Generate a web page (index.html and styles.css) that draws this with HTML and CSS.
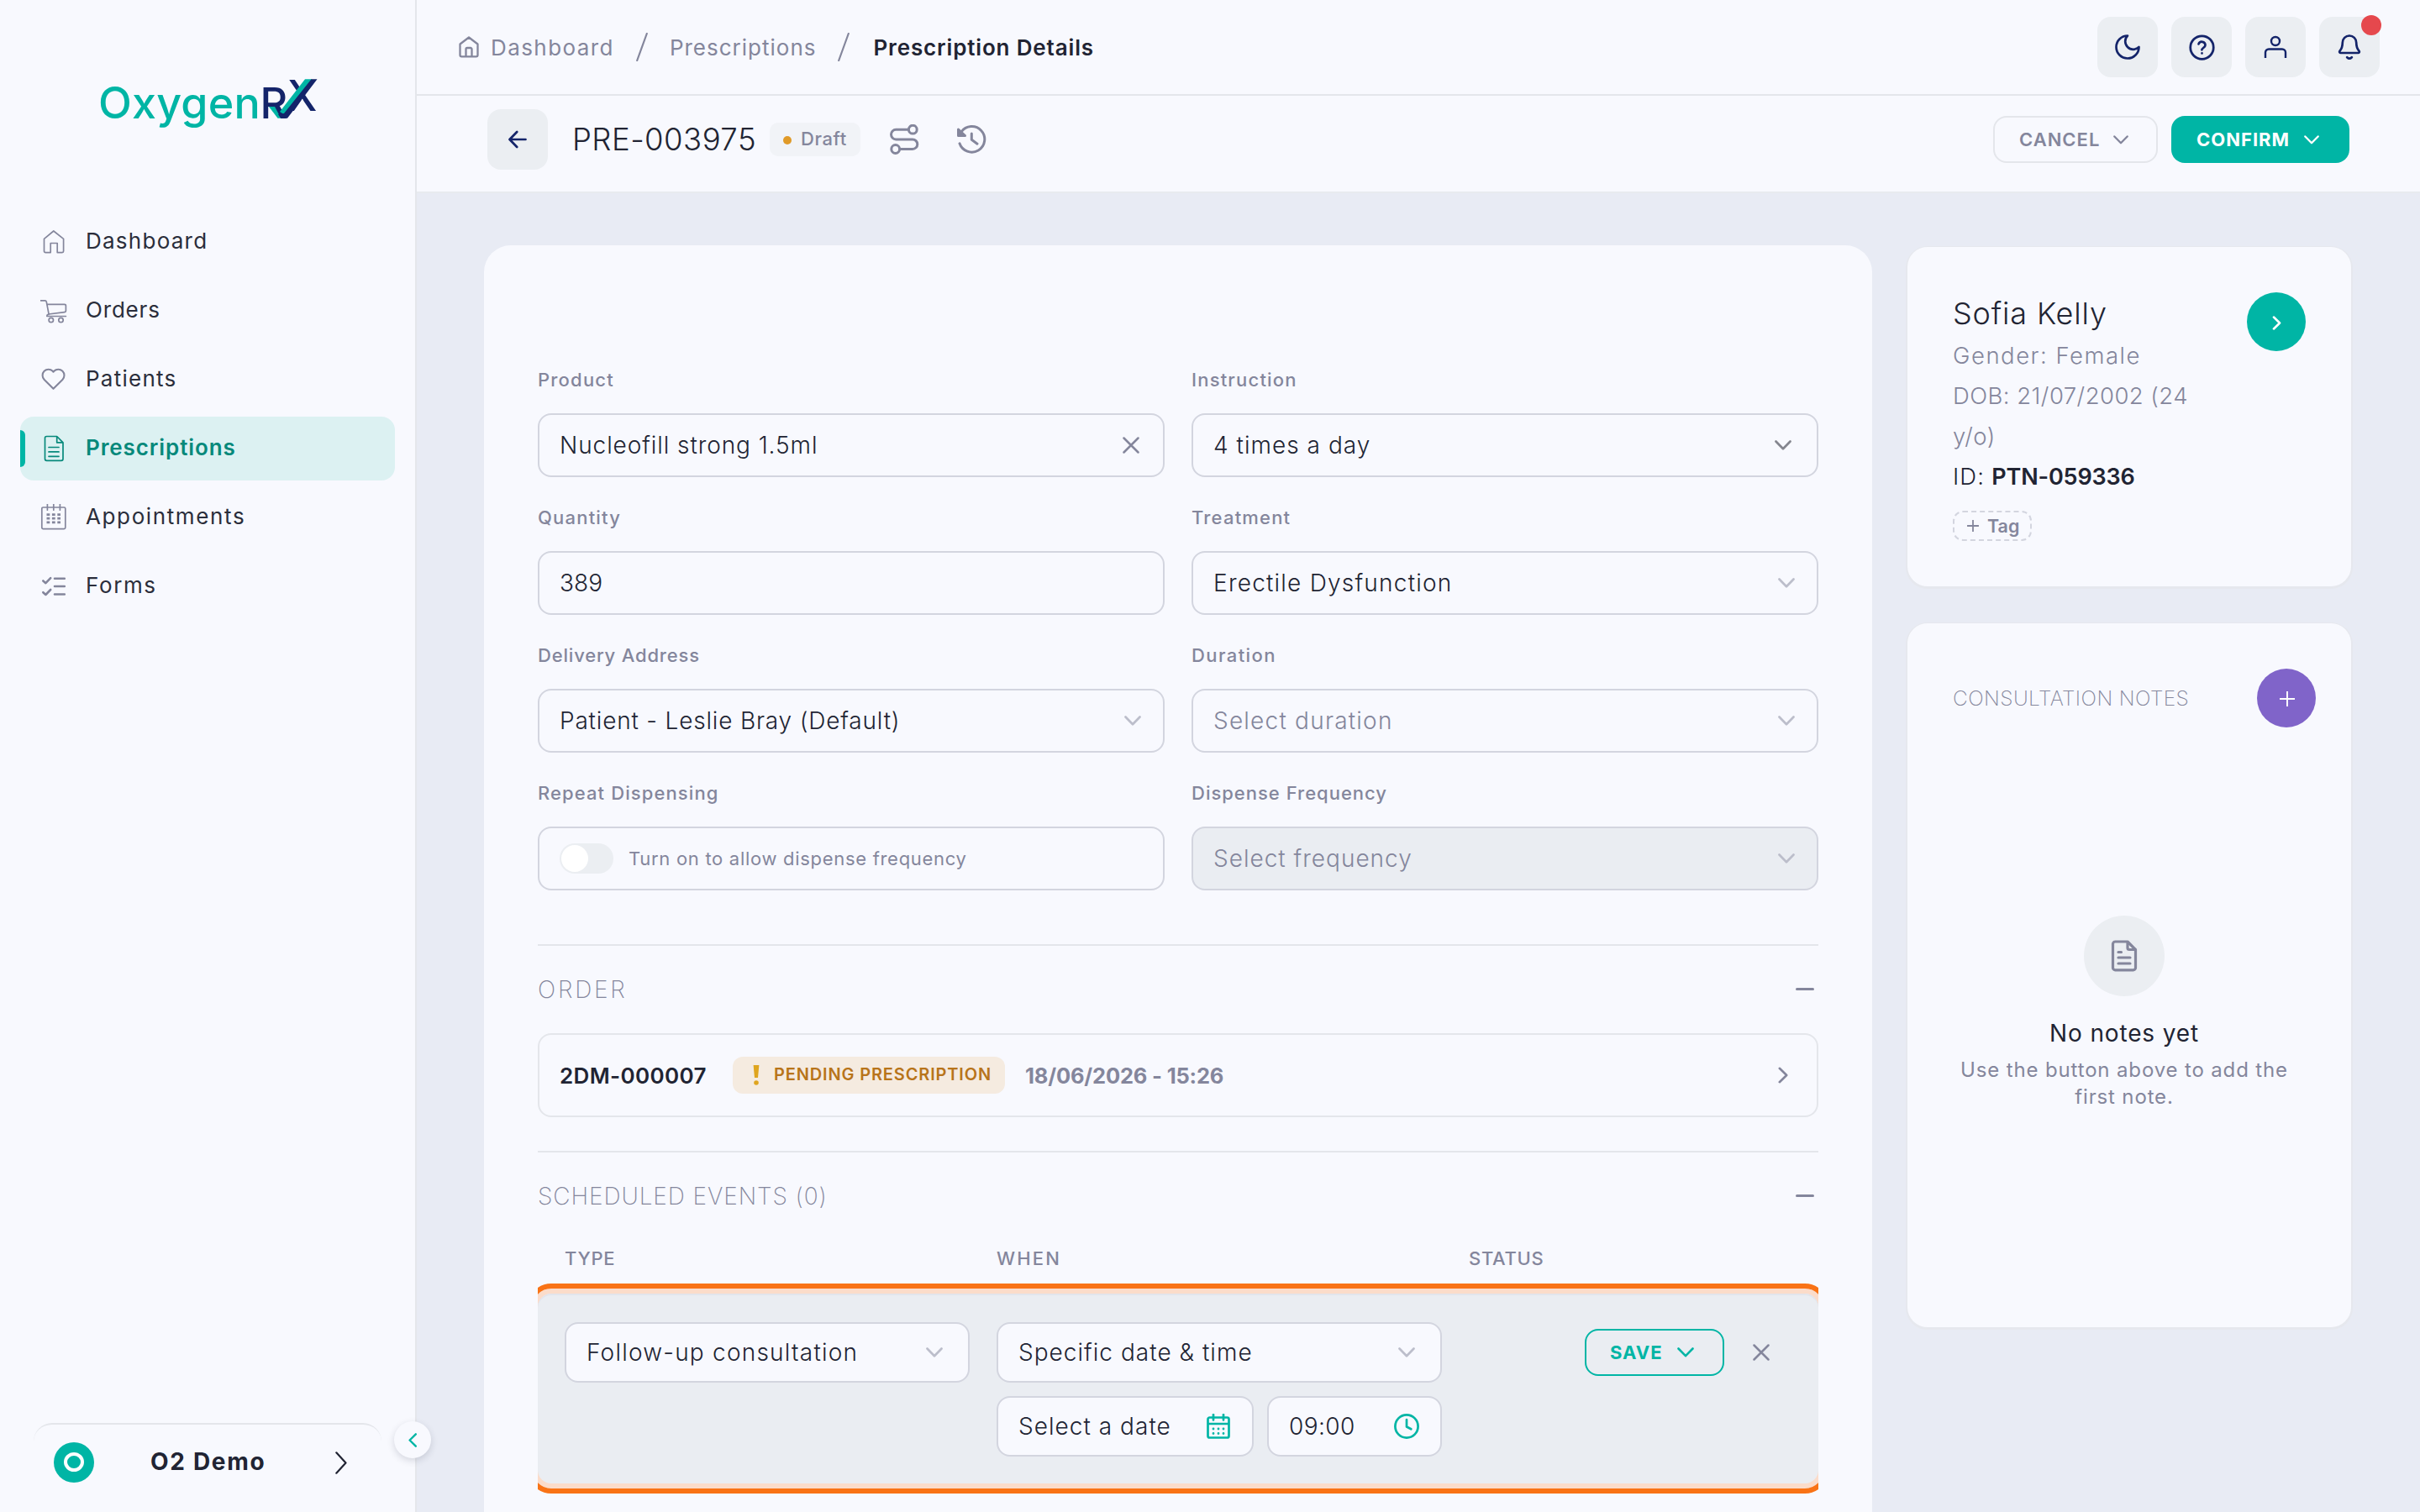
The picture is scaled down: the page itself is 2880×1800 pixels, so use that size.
FILE: index.html
```html
<!DOCTYPE html>
<html lang="en">
<head>
<meta charset="utf-8">
<title>Prescription Details</title>
<link rel="stylesheet" href="styles.css">
</head>
<body>
<svg class="defs" width="0" height="0" aria-hidden="true">
  <symbol id="chev-down" viewBox="0 0 20 12"><path d="M1.5 1.5 10 10.2 18.5 1.5"/></symbol>
  <symbol id="chev-right" viewBox="0 0 12 20"><path d="M1.8 1.8 10.2 10 1.8 18.2"/></symbol>
  <symbol id="cross" viewBox="0 0 20 20"><path d="M1.5 1.5 18.5 18.5M18.5 1.5 1.5 18.5"/></symbol>
</svg>
<div class="app">
  <aside class="sidebar">
    <svg class="logo" viewBox="0 0 280 80">
      <polygon class="logo-teal" points="210,47 219,47 229,60.7 220.5,60.7"/>
      <text class="logo-word" x="7" y="60.7">Oxygen</text>
      <text class="logo-mark" x="199.5" y="60.7">R</text>
      <text class="logo-mark" x="232" y="51.5">X</text>
      <polygon class="logo-teal" points="253,14.3 261.5,14.3 229,57 223,53"/>
      <polygon class="logo-navy" points="260.5,14.3 267.5,14.3 232,60.7 224,60.7 221,56 228,55"/>
    </svg>
    <nav class="nav">
      <a class="nav-item"><svg viewBox="0 0 32 32"><path d="M4.5 12.3 15.8 3 27.6 12.3V27a1.6 1.6 0 0 1-1.6 1.6H20.2V17.5H12.2V28.6H6.1A1.6 1.6 0 0 1 4.5 27Z"/></svg><span>Dashboard</span></a>
      <a class="nav-item"><svg viewBox="0 0 32 32"><path d="M0 3.8H5.5Q7 3.8 7.3 5.3L10.2 20.5M8 8.4H28.7Q30.4 8.4 30.4 10V16Q30.4 17.5 28.8 17.7L9.8 20Q7.6 20.6 7.8 22.5H30.4"/><circle cx="12.8" cy="27" r="2.7"/><circle cx="24.5" cy="27" r="2.7"/></svg><span class="ls-8">Orders</span></a>
      <a class="nav-item"><svg class="w2" viewBox="0 0 32 32"><path d="M15.5 26.8 4.7 15.9A7.1 7.1 0 0 1 14.7 5.8L15.5 6.7 16.3 5.8A7.1 7.1 0 0 1 26.4 15.9Z"/></svg><span>Patients</span></a>
      <a class="nav-item is-active"><svg viewBox="0 0 32 32"><path d="M7.5 1.5H19.7L27 8.8V28.3A2 2 0 0 1 25 30.3H7.5A2 2 0 0 1 5.5 28.3V3.5A2 2 0 0 1 7.5 1.5ZM19.7 1.5V8.8H27M10 14.5H22M10 19.9H22M10 25.3H22"/></svg><span>Prescriptions</span></a>
      <a class="nav-item"><svg viewBox="0 0 32 32"><rect x="1.8" y="4" width="28" height="25.6" rx="1.6"/><path d="M8.4 0V7.2M15.8 0V7.2M23.4 0V7.2"/><path class="dots" d="M7.5 12.6h16.5M7.5 17.2h16.5M7.5 21.8h16.5"/></svg><span class="ls-16">Appointments</span></a>
      <a class="nav-item"><svg class="w25" viewBox="0 0 32 32"><path d="M3.3 9.5 6.4 12.2 12.2 6.2M3.3 23.2 6.4 26 12.2 20M17 6.7H28.8M17 16H28.8M17 25.5H28.8"/></svg><span class="ls-16">Forms</span></a>
    </nav>
    <div class="account">
      <div class="avatar"><i></i></div>
      <b>O2 Demo</b>
      <svg viewBox="0 0 14 27"><path d="M1.3 1.3 12.5 13.5 1.3 25.7"/></svg>
    </div>
    <button class="collapse"><svg viewBox="0 0 10 17"><path d="M8.8 1.3 1.6 8.5 8.8 15.7"/></svg></button>
  </aside>

  <main class="main">
    <header class="topbar">
      <div class="crumbs">
        <svg class="home" viewBox="0 0 24 26"><path d="M1.5 9.5 12 1.5 22.5 9.5V22.5A1.8 1.8 0 0 1 20.7 24.3H3.3A1.8 1.8 0 0 1 1.5 22.5ZM8.5 24V15.5A1.5 1.5 0 0 1 10 14H14A1.5 1.5 0 0 1 15.5 15.5V24"/></svg>
        <span class="ls-14">Dashboard</span>
        <svg class="slash" viewBox="0 0 14 34"><path d="M12.8 1 1.2 33"/></svg>
        <span>Prescriptions</span>
        <svg class="slash" viewBox="0 0 14 34"><path d="M12.8 1 1.2 33"/></svg>
        <strong>Prescription Details</strong>
      </div>
      <div class="tools">
        <button class="tile"><svg width="36" height="36" viewBox="0 0 24 24"><path class="thin" d="M12 3a6 6 0 0 0 9 9 9 9 0 1 1-9-9Z"/></svg></button>
        <button class="tile"><svg width="33" height="33" viewBox="0 0 24 24"><circle cx="12" cy="12" r="10"/><path d="M9.1 9a3 3 0 0 1 5.8 1c0 2-3 2.6-3 4M12 17h.01"/></svg></button>
        <button class="tile"><svg class="user" width="28" height="28" viewBox="0 0 28 28"><circle cx="14" cy="7" r="5"/><path d="M2 27V20.5A4 4 0 0 1 6 16.5H22A4 4 0 0 1 26 20.5V27"/></svg></button>
        <button class="tile"><svg width="28" height="32" viewBox="0 0 28 32"><path class="w26" d="M14 2.5A8.2 8.2 0 0 0 5.8 10.7C5.8 16.5 4.6 18.2 2.6 20.6 1.7 21.8 2.3 23 3.7 23H24.3C25.7 23 26.3 21.8 25.4 20.6 23.4 18.2 22.2 16.5 22.2 10.7A8.2 8.2 0 0 0 14 2.5ZM11.2 28.2Q14 31 16.8 28.2"/></svg><i class="dot"></i></button>
      </div>
    </header>

    <section class="pagehead">
      <button class="tile back"><svg width="22" height="22" viewBox="0 0 22 22"><path class="w26" d="M20.5 11H1.8M10.2 2 1.5 11 10.2 20"/></svg></button>
      <h1>PRE-003975</h1>
      <span class="draft"><i></i>Draft</span>
      <svg class="route" viewBox="0 0 36 36"><circle cx="28.3" cy="6.2" r="4.9"/><circle cx="7.7" cy="29.5" r="4.9"/><path d="M22.5 6.3H8.3A5.8 5.8 0 0 0 8.3 17.9H28A5.8 5.8 0 0 1 28 29.5H13.5"/></svg>
      <svg class="history" viewBox="0 0 36 36"><path d="M4 22.8A15.3 15.3 0 1 0 6 9M18.3 11V18.3L25 23.2"/><path class="solid" d="M2.5 6V13.5H10.5Z"/></svg>
      <div class="actions">
        <button class="btn ghost"><span>CANCEL</span><svg class="bchev"><use href="#chev-down"/></svg></button>
        <button class="btn primary"><span>CONFIRM</span><svg class="bchev"><use href="#chev-down"/></svg></button>
      </div>
    </section>

    <section class="content">
      <div class="card form-card">
        <div class="fields">
          <div class="field"><label>Product</label><div class="box"><span class="ls-9">Nucleofill strong 1.5ml</span><svg class="clear"><use href="#cross"/></svg></div></div>
          <div class="field"><label>Instruction</label><div class="box"><span>4 times a day</span><svg class="chev dark"><use href="#chev-down"/></svg></div></div>
          <div class="field"><label>Quantity</label><div class="box"><span class="ls-0">389</span></div></div>
          <div class="field"><label>Treatment</label><div class="box"><span class="ls-12">Erectile Dysfunction</span><svg class="chev"><use href="#chev-down"/></svg></div></div>
          <div class="field"><label class="ls-8">Delivery Address</label><div class="box"><span class="ls-8">Patient - Leslie Bray (Default)</span><svg class="chev"><use href="#chev-down"/></svg></div></div>
          <div class="field"><label class="ls-14">Duration</label><div class="box"><span class="hint ls-12">Select duration</span><svg class="chev"><use href="#chev-down"/></svg></div></div>
          <div class="field"><label class="ls-11">Repeat Dispensing</label><div class="box"><i class="toggle"></i><span class="toggle-text">Turn on to allow dispense frequency</span></div></div>
          <div class="field"><label class="ls-10">Dispense Frequency</label><div class="box disabled"><span class="hint ls-10">Select frequency</span><svg class="chev"><use href="#chev-down"/></svg></div></div>
        </div>

        <div class="section order">
          <div class="section-head"><h2 class="ls-28">ORDER</h2><i class="minus"></i></div>
          <div class="order-row">
            <b class="order-id">2DM-000007</b>
            <span class="pending"><svg viewBox="0 0 8 24"><path d="M0.6 0H7.4L6 15H2Z"/><circle cx="4" cy="21" r="2.8"/></svg>PENDING PRESCRIPTION</span>
            <b class="order-date">18/06/2026 - 15:26</b>
            <svg class="go"><use href="#chev-right"/></svg>
          </div>
        </div>

        <div class="section events">
          <div class="section-head"><h2>SCHEDULED EVENTS (0)</h2><i class="minus"></i></div>
          <div class="cols table-head"><span>TYPE</span><span class="ls-20">WHEN</span><span>STATUS</span></div>
          <div class="clip">
            <div class="cols event-row">
              <div class="box"><span class="ls-12">Follow-up consultation</span><svg class="chev"><use href="#chev-down"/></svg></div>
              <div class="when">
                <div class="box wide"><span>Specific date &amp; time</span><svg class="chev"><use href="#chev-down"/></svg></div>
                <div class="box date"><span>Select a date</span>
                  <svg class="tealicon" width="28" height="30" viewBox="0 0 28 30"><path d="M3.5 4.5H24.5A2 2 0 0 1 26.5 6.5V26.5A2 2 0 0 1 24.5 28.5H3.5A2 2 0 0 1 1.5 26.5V6.5A2 2 0 0 1 3.5 4.5ZM1.5 12H26.5M8 1V7.5M20 1V7.5"/><path class="caldots" d="M8 18h12.1M8 23.5h12.1"/></svg></div>
                <div class="box time"><span class="ls-3">09:00</span>
                  <svg class="tealicon" width="30" height="30" viewBox="0 0 30 30"><circle cx="15" cy="15" r="13.6"/><path d="M15 7V15.5L20.3 18.3"/></svg></div>
              </div>
              <div></div>
              <div class="row-actions">
                <button class="btn outline"><span>SAVE</span><svg class="bchev"><use href="#chev-down"/></svg></button>
                <svg class="remove"><use href="#cross"/></svg>
              </div>
            </div>
          </div>
        </div>
      </div>

      <div class="side">
        <div class="card patient">
          <div class="patient-info">
            <h3>Sofia Kelly</h3>
            <p class="gender">Gender: Female</p>
            <p>DOB: 21/07/2002 (24 y/o)</p>
            <p class="id"><span>ID:</span> <b>PTN-059336</b></p>
            <span class="tag"><svg viewBox="0 0 14 14"><path d="M7 .5V13.5M.5 7H13.5"/></svg>Tag</span>
          </div>
          <button class="round teal"><svg width="11" height="17"><use href="#chev-right"/></svg></button>
        </div>
        <div class="card notes">
          <div class="notes-head"><h2>CONSULTATION NOTES</h2><button class="round purple"><svg width="18" height="18" viewBox="0 0 18 18"><path d="M9 .5V17.5M.5 9H17.5"/></svg></button></div>
          <div class="empty">
            <div class="empty-icon"><svg width="32" height="38" viewBox="0 0 32 38"><path d="M5 2H20L29.5 11.5V33A2.8 2.8 0 0 1 26.7 35.8H5.3A2.8 2.8 0 0 1 2.5 33V4.8A2.8 2.8 0 0 1 5.3 2M20 2V9.5A2 2 0 0 0 22 11.5H29.5M9 14.5H12.5M9 21H23M9 28H23"/></svg></div>
            <h4>No notes yet</h4>
            <p>Use the button above to add the first note.</p>
          </div>
        </div>
      </div>
    </section>
  </main>
</div>
</body>
</html>
```
FILE: styles.css
```css
:root {
  --bg: #f8f9fe;
  --page: #e8ebf4;
  --tile: #ebeef2;
  --line: #e4e6eb;
  --border: #d3d5df;
  --muted: #84869c;
  --ink: #212433;
  --teal: #00b5a5;
  --navy: #14246a;
}
* { box-sizing: border-box; margin: 0; padding: 0; }
body { background: var(--page); font-family: "Inter", "Open Sans", sans-serif; color: var(--ink); }
button { border: 0; background: none; font: inherit; }
svg { display: block; flex: none; fill: none; stroke: currentColor; stroke-width: 2; stroke-linecap: round; stroke-linejoin: round; }
.defs { position: absolute; }
.app { display: flex; width: 2880px; height: 1800px; overflow: hidden; }

/* sidebar */
.sidebar { position: relative; display: flex; flex-direction: column; width: 496px; flex: none; background: var(--bg); border-right: 2px solid var(--line); z-index: 2; }
.logo { width: 280px; height: 80px; margin: 80px 0 90px 110px; stroke: none; }
.logo-teal { fill: var(--teal); }
.logo-navy { fill: var(--navy); }
.logo-word { fill: var(--teal); font-size: 52px; font-weight: 450; letter-spacing: .2px; }
.logo-mark { fill: var(--navy); font-size: 50.5px; font-weight: 550; }
.nav { display: flex; flex-direction: column; gap: 6px; padding: 0 24px; }
.nav-item { position: relative; display: flex; align-items: center; height: 76px; padding-left: 24px; gap: 22px; border-radius: 16px; overflow: hidden; font-size: 26px; font-weight: 430; letter-spacing: 1.25px; color: #2b2e3b; }
.nav-item svg { width: 32px; height: 32px; color: var(--muted); stroke-width: 1.7; }
.nav-item span { line-height: 32px; margin-top: -2px; }
.nav-item .w2 { stroke-width: 2.1; }
.nav-item .w25 { stroke-width: 2.6; }
.nav-item .dots { stroke-width: 2.8; stroke-dasharray: 3.8 2.6; stroke-linecap: butt; }
.nav-item.is-active { background: #dcf1f2; color: #07897b; font-weight: 570; letter-spacing: .9px; }
.nav-item.is-active svg { color: #07897b; }
.nav-item.is-active::before { content: ""; position: absolute; left: 0; top: 16px; width: 6px; height: 44px; background: var(--teal); border-radius: 0 6px 6px 0; }
.account { display: flex; align-items: center; height: 106px; margin: auto 40px 0 40px; padding: 0 24px 14px; border-top: 2px solid var(--line); border-radius: 22px 22px 0 0; }
.avatar { display: flex; align-items: center; justify-content: center; width: 48px; height: 48px; margin-top: -1px; border-radius: 50%; background: var(--teal); }
.avatar i { width: 24px; height: 23px; border: 4.5px solid #fff; border-radius: 50%; }
.account b { width: 220px; margin: -2px 0 0 67px; font-size: 28px; font-weight: 650; letter-spacing: 1.7px; white-space: nowrap; }
.account svg { width: 14px; height: 27px; stroke-width: 2.2; }
.collapse { position: absolute; left: 469px; top: 1692px; display: flex; align-items: center; justify-content: center; width: 44px; height: 44px; border-radius: 50%; background: var(--bg); color: var(--teal); box-shadow: 0 3px 8px rgba(30, 35, 60, .16); }
.collapse svg { width: 10px; height: 17px; stroke-width: 2.4; }

/* top bar */
.main { display: flex; flex-direction: column; flex: 1; min-width: 0; }
.topbar { display: flex; align-items: center; justify-content: space-between; height: 114px; padding: 0 48px 0 50px; background: var(--bg); border-bottom: 2px solid var(--line); }
.crumbs { display: flex; align-items: center; font-size: 26px; letter-spacing: 1px; color: var(--muted); line-height: 34px; }
.crumbs span, .crumbs strong { margin-top: 2px; }
.crumbs .home { width: 24px; height: 26px; margin-right: 14px; stroke-width: 2.3; }
.crumbs .slash { width: 14px; height: 34px; margin: 0 26px; stroke-width: 2.2; }
.crumbs strong { margin-left: 2px; font-weight: 600; letter-spacing: .85px; color: var(--ink); }
.tools { display: flex; gap: 16px; }
.tile { position: relative; display: flex; align-items: center; justify-content: center; width: 72px; height: 72px; border-radius: 16px; background: var(--tile); color: var(--navy); }
.tile .thin { stroke-width: 1.8; }
.tile .user { stroke-linecap: butt; stroke-width: 2.4; }
.w26 { stroke-width: 2.7; }
.dot { position: absolute; top: -2px; right: -2px; width: 24px; height: 24px; border-radius: 50%; background: #e5484d; }

/* page header */
.pagehead { display: flex; align-items: center; height: 116px; padding: 0 84px 10px; background: var(--bg); border-bottom: 2px solid #e8ebef; margin-bottom: -2px; }
.tile.back { border-radius: 16px; }
h1 { width: 235px; margin-left: 29px; font-size: 36.5px; line-height: 44px; font-weight: 300; letter-spacing: .45px; }
.draft { display: flex; align-items: center; width: 108px; height: 40px; padding-left: 16px; margin-right: 34px; border-radius: 10px; background: #f1f3f7; font-size: 22px; font-weight: 500; line-height: 36px; letter-spacing: .6px; color: var(--muted); padding-bottom: 2px; }
.draft i { width: 10px; height: 10px; margin: 3px 11px 0 0; border-radius: 50%; background: #e09a28; }
.route, .history { width: 36px; height: 36px; color: var(--muted); stroke-width: 3; }
.history { margin-left: 44px; }
.solid { fill: currentColor; }
.actions { display: flex; gap: 16px; margin-left: auto; }
.btn { display: flex; align-items: center; height: 56px; border-radius: 16px; font-size: 22px; font-weight: 600; letter-spacing: 1px; }
.bchev { width: 18px; height: 11px; stroke-width: 2.6; }
.btn.ghost { width: 196px; padding-left: 29px; border: 2px solid var(--line); color: var(--muted); }
.btn.ghost .bchev { margin-left: 16px; }
.btn.primary { width: 212px; padding-left: 30px; background: var(--teal); color: #fff; font-weight: 700; }
.btn.primary .bchev { margin-left: 17px; }
.btn.outline { width: 166px; padding-left: 28px; border: 2.5px solid var(--teal); color: var(--teal); font-weight: 700; }
.btn.outline .bchev { width: 20px; height: 12px; margin-left: 17px; }

/* content */
.content { display: flex; align-items: flex-start; gap: 42px; flex: 1; min-height: 0; padding: 64px 82px 0 80px; }
.card { background: var(--bg); }
.form-card { width: 1652px; height: 1600px; padding: 144px 64px 0; border-radius: 32px; }
.fields { display: grid; grid-template-columns: 746px 746px; gap: 32px; }
.field { display: flex; flex-direction: column; gap: 24px; }
label { height: 32px; line-height: 33px; font-size: 22px; font-weight: 550; letter-spacing: 1.2px; color: var(--muted); }
.box { display: flex; align-items: center; height: 76px; padding: 0 28px 0 24px; border: 2px solid var(--border); border-radius: 16px; background: var(--bg); font-size: 28px; font-weight: 350; letter-spacing: 1.03px; white-space: nowrap; }
.box svg { margin-left: auto; }
.box .hint { color: var(--muted); }
.disabled { background: #eaedf2; }
.chev { width: 20px; height: 12px; color: #bcbecb; stroke-width: 2.7; margin-right: -2px; }
.chev.dark { color: #85868f; margin-right: 2px; }
.clear { width: 20px; height: 20px; color: var(--muted); stroke-width: 2.5; }
.toggle { width: 64px; height: 36px; padding: 2px; border-radius: 18px; background: var(--tile); }
.toggle::before { content: ""; display: block; width: 32px; height: 32px; border-radius: 50%; background: #fff; }
.toggle-text { margin-left: 18px; font-size: 22px; font-weight: 430; letter-spacing: .7px; color: var(--muted); }

.section { border-top: 2px solid var(--line); }
.order { margin-top: 64px; }
.events { margin-top: 40px; }
.section-head { display: flex; align-items: center; justify-content: space-between; height: 104px; padding-right: 5px; }
h2 { font-size: 28px; font-weight: 250; letter-spacing: .9px; color: var(--muted); }
.minus { width: 22px; height: 3px; margin-top: -1px; border-radius: 2px; background: var(--muted); }
.order-row { display: flex; align-items: center; height: 100px; padding: 0 34px 0 24px; border: 2px solid var(--line); border-radius: 16px; font-size: 26px; }
.order-row b { margin-top: 1px; font-weight: 600; }
.order-id { width: 206px; letter-spacing: .35px; }
.pending { display: flex; align-items: center; width: 324px; height: 44px; padding: 0 0 2px 24px; margin-right: 24px; border-radius: 12px; background: #f5ebe0; color: #b8741a; font-size: 20px; font-weight: 600; letter-spacing: .85px; white-space: nowrap; }
.pending svg { width: 8px; height: 24px; margin: 2px 17px 0 0; fill: #dfa51f; stroke: none; }
.order-row .order-date { font-size: 25.5px; font-weight: 650; letter-spacing: -.18px; color: var(--muted); }
.go { width: 12px; height: 20px; margin-left: auto; color: var(--muted); stroke-width: 2.6; }

.cols { display: grid; grid-template-columns: 482px 530px 106px 1fr; column-gap: 32px; padding: 0 32px; }
.table-head { height: 46px; padding-bottom: 3px; align-items: center; font-size: 22px; font-weight: 550; letter-spacing: .7px; color: var(--muted); }
.clip { padding: 18px 0; overflow: hidden; }
.event-row { height: 226px; padding-top: 34px; align-items: start; border-radius: 16px; background: #eaedf2; box-shadow: inset 0 2px 0 #e2e5ec, 0 0 0 6px #fbdcca; outline: 6px solid #f97316; outline-offset: 6px; }
.event-row .box { height: 72px; padding-right: 32px; }
.when { display: flex; flex-wrap: wrap; gap: 16px; }
.wide { width: 530px; }
.date { width: 306px; }
.event-row .date { padding-right: 26px; }
.time { width: 208px; }
.event-row .time { padding-right: 25px; }
.tealicon { color: var(--teal); stroke-width: 2.7; }
.caldots { stroke-width: 2.8; stroke-dasharray: 0 6; }
.row-actions { display: flex; align-items: center; height: 72px; }
.remove { width: 20px; height: 20px; margin-left: 34px; color: var(--muted); stroke-width: 2.5; }

/* side column */
.side { width: 528px; padding-top: 2px; }
.side .card { border-radius: 24px; box-shadow: 0 1px 0 2px #e6e8ee; }
.patient { display: flex; justify-content: space-between; height: 404px; padding: 54px; }
.patient-info { width: 300px; }
h3 { height: 51px; font-size: 36px; line-height: 51px; font-weight: 350; letter-spacing: .85px; }
.patient p { font-size: 27.5px; font-weight: 350; line-height: 48px; letter-spacing: .45px; color: var(--muted); }
.patient p.gender { letter-spacing: 1.5px; }
.patient p.id { color: var(--ink); white-space: nowrap; }
.id span { letter-spacing: 1.1px; }
.id b { font-size: 27px; font-weight: 600; letter-spacing: -.15px; }
.tag { display: flex; align-items: center; width: 94px; height: 36px; margin-top: 16px; padding-left: 15px; border: 2px dashed var(--border); border-radius: 12px; font-size: 21.5px; font-weight: 600; letter-spacing: 0; color: var(--muted); }
.tag svg { width: 14px; height: 14px; margin-right: 10px; stroke-width: 1.8; }
.round { display: flex; align-items: center; justify-content: center; width: 70px; height: 70px; border-radius: 50%; color: #fff; }
.round.teal { background: var(--teal); }
.round.teal svg { stroke-width: 3; margin-top: 2px; }
.round.purple { background: #8064c9; }
.round.purple svg { margin-left: 2px; margin-top: 2px; }
.notes { height: 838px; margin-top: 44px; padding: 54px 42px 0 54px; }
.notes-head { display: flex; align-items: center; justify-content: space-between; }
.notes h2 { font-size: 24.5px; letter-spacing: .42px; }
.empty { display: flex; flex-direction: column; align-items: center; width: 408px; margin-top: 224px; text-align: center; }
.empty-icon { display: flex; align-items: center; justify-content: center; width: 96px; height: 96px; border-radius: 50%; background: var(--tile); color: var(--muted); }
.empty-icon svg { stroke-width: 3.2; }
.empty h4 { margin-top: 24px; font-size: 28px; line-height: 40px; font-weight: 430; letter-spacing: .85px; }
.empty p { margin-top: 8px; font-size: 24px; line-height: 32px; letter-spacing: .85px; color: var(--muted); }

/* tracking steps */
.ls-0 { letter-spacing: .1px; }
.ls-3 { letter-spacing: .4px; }
.ls-8 { letter-spacing: .82px; }
.ls-9 { letter-spacing: .92px; }
.ls-10 { letter-spacing: 1px; }
.ls-11 { letter-spacing: 1.1px; }
.ls-12 { letter-spacing: 1.22px; }
.ls-14 { letter-spacing: 1.42px; }
.ls-16 { letter-spacing: 1.62px; }
.ls-20 { letter-spacing: 2.2px; }
.ls-28 { letter-spacing: 2.8px; }
```
